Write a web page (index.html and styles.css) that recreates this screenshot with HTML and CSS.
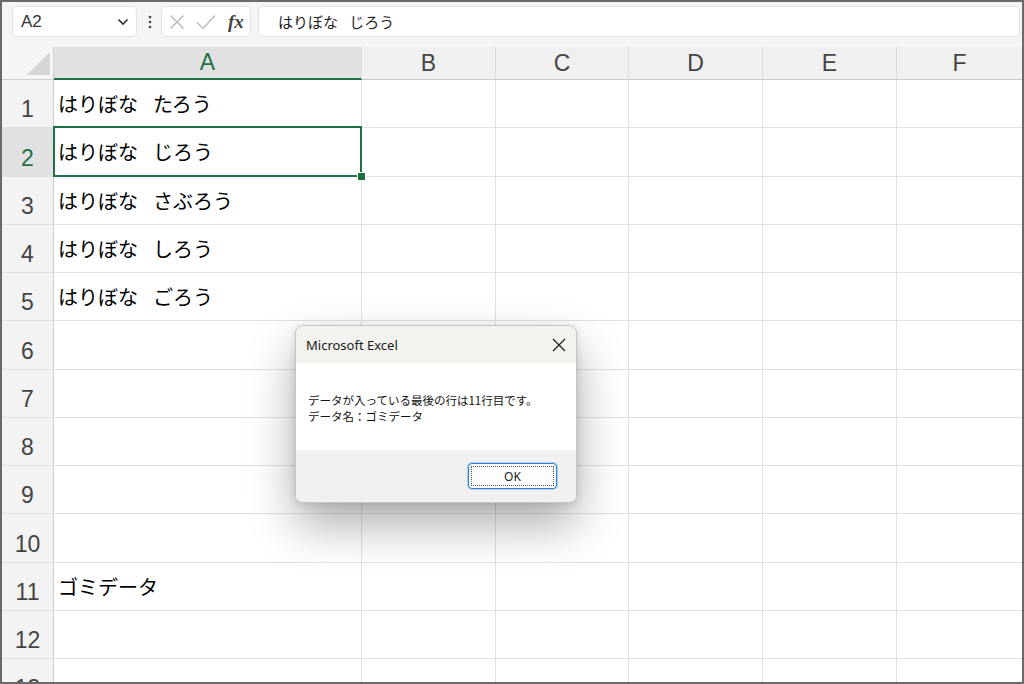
FILE: index.html
```html
<!DOCTYPE html>
<html lang="ja">
<head>
<meta charset="utf-8">
<title>Excel</title>
<link rel="stylesheet" href="styles.css">
</head>
<body>
<div class="frame">
  <div class="toolbar">
    <div class="namebox">
      <span class="ref">A2</span>
      <svg class="chev" width="12" height="8" viewBox="0 0 12 8"><path d="M1.5 1.5 L6 6 L10.5 1.5" stroke="#333" stroke-width="1.7" fill="none"/></svg>
    </div>
    <svg class="dots" width="4" height="14" viewBox="0 0 4 14"><circle cx="2" cy="2" r="1.3" fill="#444"/><circle cx="2" cy="7" r="1.3" fill="#444"/><circle cx="2" cy="12" r="1.3" fill="#444"/></svg>
    <div class="fxbox">
      <svg width="16" height="16" viewBox="0 0 16 16"><path d="M1.5 1.5 L14.5 14.5 M14.5 1.5 L1.5 14.5" stroke="#b4b4b4" stroke-width="1.2" fill="none"/></svg>
      <svg width="20" height="16" viewBox="0 0 20 16"><path d="M1 8.5 L7 14.5 L19 1.5" stroke="#b4b4b4" stroke-width="1.2" fill="none"/></svg>
      <span class="fx">fx</span>
    </div>
    <div class="formula">はりぼな<span class="gap">　</span>じろう</div>
  </div>
  <div class="sheet">
    <div class="grid">
      <div class="corner"><svg width="24" height="24" viewBox="0 0 24 24"><path d="M23 0 L23 23 L0 23 Z" fill="#d6d6d6"/></svg></div>
      <div class="colhead sel">A</div>
      <div class="colhead">B</div>
      <div class="colhead">C</div>
      <div class="colhead">D</div>
      <div class="colhead">E</div>
      <div class="colhead last">F</div>

      <div class="rowhead">1</div><div class="cell">はりぼな<span class="gap">　</span>たろう</div><div class="cell"></div><div class="cell"></div><div class="cell"></div><div class="cell"></div><div class="cell last"></div>
      <div class="rowhead sel">2</div><div class="cell">はりぼな<span class="gap">　</span>じろう</div><div class="cell"></div><div class="cell"></div><div class="cell"></div><div class="cell"></div><div class="cell last"></div>
      <div class="rowhead">3</div><div class="cell">はりぼな<span class="gap">　</span>さぶろう</div><div class="cell"></div><div class="cell"></div><div class="cell"></div><div class="cell"></div><div class="cell last"></div>
      <div class="rowhead">4</div><div class="cell">はりぼな<span class="gap">　</span>しろう</div><div class="cell"></div><div class="cell"></div><div class="cell"></div><div class="cell"></div><div class="cell last"></div>
      <div class="rowhead">5</div><div class="cell">はりぼな<span class="gap">　</span>ごろう</div><div class="cell"></div><div class="cell"></div><div class="cell"></div><div class="cell"></div><div class="cell last"></div>
      <div class="rowhead">6</div><div class="cell"></div><div class="cell"></div><div class="cell"></div><div class="cell"></div><div class="cell"></div><div class="cell last"></div>
      <div class="rowhead">7</div><div class="cell"></div><div class="cell"></div><div class="cell"></div><div class="cell"></div><div class="cell"></div><div class="cell last"></div>
      <div class="rowhead">8</div><div class="cell"></div><div class="cell"></div><div class="cell"></div><div class="cell"></div><div class="cell"></div><div class="cell last"></div>
      <div class="rowhead">9</div><div class="cell"></div><div class="cell"></div><div class="cell"></div><div class="cell"></div><div class="cell"></div><div class="cell last"></div>
      <div class="rowhead">10</div><div class="cell"></div><div class="cell"></div><div class="cell"></div><div class="cell"></div><div class="cell"></div><div class="cell last"></div>
      <div class="rowhead">11</div><div class="cell">ゴミデータ</div><div class="cell"></div><div class="cell"></div><div class="cell"></div><div class="cell"></div><div class="cell last"></div>
      <div class="rowhead">12</div><div class="cell"></div><div class="cell"></div><div class="cell"></div><div class="cell"></div><div class="cell"></div><div class="cell last"></div>
      <div class="rowhead">13</div><div class="cell"></div><div class="cell"></div><div class="cell"></div><div class="cell"></div><div class="cell"></div><div class="cell last"></div>
    </div>
    <div class="selection"><span class="handle"></span></div>
    <div class="dialog">
      <div class="dlg-title">
        <span>Microsoft Excel</span>
        <svg width="14" height="14" viewBox="0 0 14 14"><path d="M1 1 L13 13 M13 1 L1 13" stroke="#222" stroke-width="1.3" fill="none"/></svg>
      </div>
      <div class="dlg-body">
        <p>データが入っている最後の行は11行目です。</p>
        <p>データ名：ゴミデータ</p>
      </div>
      <div class="dlg-foot">
        <button class="ok"><span>OK</span></button>
      </div>
    </div>
  </div>
</div>
</body>
</html>
```

FILE: styles.css
```css
html, body {
  margin: 0;
  padding: 0;
  background: #ffffff;
}

.frame {
  width: 1024px;
  height: 684px;
  box-sizing: border-box;
  border: 2px solid #6a6a6a;
  background: #f5f5f5;
  overflow: hidden;
  position: relative;
  font-family: "Liberation Sans", "Noto Sans CJK JP", sans-serif;
}

/* toolbar */
.toolbar {
  height: 45px;
  box-sizing: border-box;
  padding: 4px 2px 0 10px;
  display: flex;
  align-items: flex-start;
}

.namebox {
  width: 125px;
  height: 31px;
  box-sizing: border-box;
  background: #fff;
  border: 1px solid #e3e3e3;
  border-radius: 5px;
  display: flex;
  align-items: center;
  justify-content: space-between;
  padding: 0 7px 0 8px;
}

.ref {
  font-size: 17px;
  color: #333;
}

.chev {
  margin-top: 1px;
}

.dots {
  margin: 9px 0 0 11px;
}

.fxbox {
  margin-left: 9px;
  width: 90px;
  height: 31px;
  box-sizing: border-box;
  background: #fff;
  border: 1px solid #e3e3e3;
  border-radius: 5px;
  display: flex;
  align-items: center;
  gap: 11px;
  padding-left: 7px;
}

.fx {
  font-family: "Liberation Serif", serif;
  font-style: italic;
  font-weight: bold;
  font-size: 19px;
  color: #444;
  margin-left: 1px;
}

.formula {
  margin-left: 7px;
  flex: 1;
  height: 31px;
  box-sizing: border-box;
  background: #fff;
  border: 1px solid #e3e3e3;
  border-radius: 5px;
  padding-left: 19px;
  font-family: "Noto Sans CJK JP", sans-serif;
  font-size: 15px;
  line-height: 29px;
  color: #222;
}

.gap {
  letter-spacing: -0.25em;
}

/* sheet */
.sheet {
  position: relative;
  height: 635px;
  overflow: hidden;
}

.grid {
  display: grid;
  grid-template-columns: 52px 308px 134px 133px 134px 134px 1fr;
  grid-template-rows: 33px;
  grid-auto-rows: 48.27px;
  background: #fff;
}

.corner {
  background: #f5f5f5;
  border-right: 1px solid #d0d0d0;
  border-bottom: 1px solid #d0d0d0;
  display: flex;
  align-items: flex-end;
  justify-content: flex-end;
  padding: 0 2px 3px 0;
}

.colhead {
  background: #f0f0f0;
  border-right: 1px solid #dcdcdc;
  border-bottom: 1px solid #c9c9c9;
  display: flex;
  align-items: center;
  justify-content: center;
  font-size: 23px;
  color: #444;
}

.colhead.sel {
  background: #e1e1e1;
  border-bottom: 2px solid #1e7145;
  color: #1e7145;
}

.colhead.last,
.cell.last {
  border-right: none;
}

.rowhead {
  background: #f3f3f3;
  border-right: 1px solid #cfcfcf;
  border-bottom: 1px solid #e1e1e1;
  display: flex;
  align-items: flex-end;
  justify-content: center;
  font-size: 23px;
  line-height: 1;
  padding-bottom: 6px;
  color: #444;
  box-sizing: border-box;
}

.rowhead.sel {
  background: #e1e1e1;
  color: #1e7145;
}

.cell {
  border-right: 1px solid #e1e1e1;
  border-bottom: 1px solid #e1e1e1;
  font-family: "Noto Sans CJK JP", sans-serif;
  font-size: 20px;
  font-weight: 400;
  color: #000;
  display: flex;
  align-items: center;
  padding-left: 4px;
  white-space: nowrap;
}

/* selection overlay */
.selection {
  position: absolute;
  left: 51px;
  top: 79px;
  width: 309px;
  height: 51px;
  box-sizing: border-box;
  border: 2px solid #1e7145;
}

.handle {
  position: absolute;
  right: -6px;
  bottom: -6px;
  width: 9px;
  height: 9px;
  background: #1e7145;
  border: 1px solid #fff;
  box-sizing: border-box;
}

/* dialog */
.dialog {
  position: absolute;
  left: 293px;
  top: 278px;
  width: 282px;
  height: 178px;
  box-sizing: border-box;
  border: 1px solid #c4c4c4;
  border-radius: 8px;
  overflow: hidden;
  background: #fff;
  box-shadow: 0 22px 48px rgba(0, 0, 0, 0.32), 0 2px 8px rgba(0, 0, 0, 0.12);
  display: flex;
  flex-direction: column;
}

.dlg-title {
  height: 37px;
  flex: none;
  background: #f3f2ee;
  display: flex;
  align-items: center;
  justify-content: space-between;
  padding: 0 10px 0 10px;
  font-family: "Noto Sans", sans-serif;
  font-size: 13px;
  color: #1a1a1a;
}

.dlg-body {
  flex: 1;
  background: #fff;
  padding: 29px 0 0 12px;
  font-family: "Noto Sans CJK JP", sans-serif;
  font-size: 11.5px;
  color: #111;
}

.dlg-body p {
  margin: 0;
  line-height: 16px;
}

.dlg-foot {
  height: 52px;
  flex: none;
  background: #f0f0f0;
  display: flex;
  justify-content: flex-end;
  align-items: flex-start;
  padding: 13px 19px 0 0;
  box-sizing: border-box;
}

.ok {
  width: 89px;
  height: 26px;
  box-sizing: border-box;
  border: 1px solid #2f7fd1;
  border-radius: 4px;
  background: #fdfdfd;
  padding: 2px;
  font-family: "Noto Sans", sans-serif;
  font-size: 12px;
  color: #222;
  box-shadow: 0 0 0 1px rgba(70, 140, 220, 0.35);
}

.ok span {
  display: flex;
  align-items: center;
  justify-content: center;
  height: 100%;
  border: 1px dotted #555;
  box-sizing: border-box;
}
```
